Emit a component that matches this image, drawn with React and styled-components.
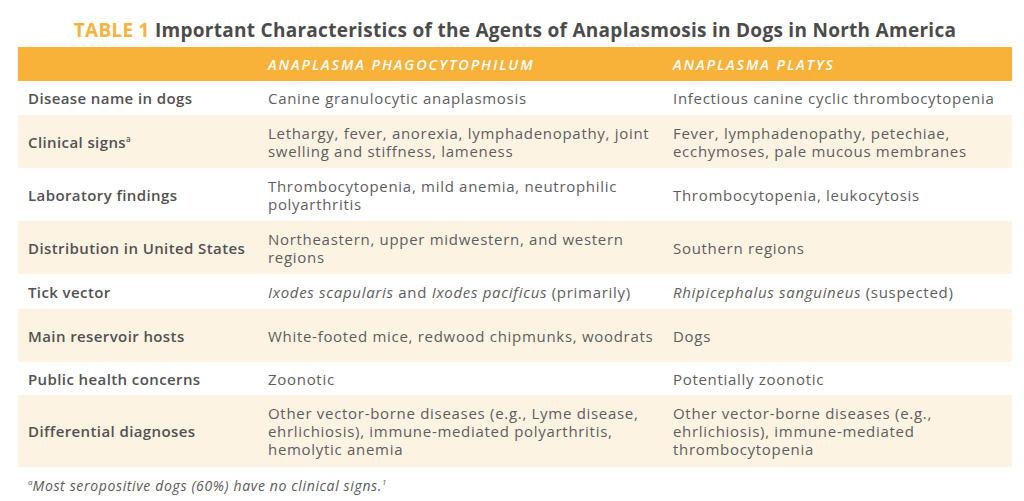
import React from "react";
import styled, { createGlobalStyle } from "styled-components";

const GlobalStyle = createGlobalStyle`
  html, body {
    margin: 0;
    padding: 0;
    background: #ffffff;
  }
  body {
    font-family: "Open Sans", "Noto Sans", sans-serif;
    color: #555555;
  }
`;

const Sup = styled.sup`
  font-size: 8px;
  vertical-align: 6px;
  line-height: 0;
  letter-spacing: 0;
`;

const rows = [
  {
    label: "Disease name in dogs",
    a: "Canine granulocytic anaplasmosis",
    b: "Infectious canine cyclic thrombocytopenia",
    h: 34,
  },
  {
    label: (
      <>
        Clinical signs<Sup>a</Sup>
      </>
    ),
    a: "Lethargy, fever, anorexia, lymphadenopathy, joint swelling and stiffness, lameness",
    b: "Fever, lymphadenopathy, petechiae, ecchymoses, pale mucous membranes",
    h: 53,
  },
  {
    label: "Laboratory findings",
    a: "Thrombocytopenia, mild anemia, neutrophilic polyarthritis",
    b: "Thrombocytopenia, leukocytosis",
    h: 53,
  },
  {
    label: "Distribution in United States",
    a: "Northeastern, upper midwestern, and western regions",
    b: "Southern regions",
    h: 53,
  },
  {
    label: "Tick vector",
    a: (
      <>
        <i>Ixodes scapularis</i> and <i>Ixodes pacificus</i> (primarily)
      </>
    ),
    b: (
      <>
        <i>Rhipicephalus sanguineus</i> (suspected)
      </>
    ),
    h: 35,
  },
  {
    label: "Main reservoir hosts",
    a: "White-footed mice, redwood chipmunks, woodrats",
    b: "Dogs",
    h: 53,
  },
  {
    label: "Public health concerns",
    a: "Zoonotic",
    b: "Potentially zoonotic",
    h: 33,
  },
  {
    label: "Differential diagnoses",
    a: "Other vector-borne diseases (e.g., Lyme disease, ehrlichiosis), immune-mediated polyarthritis, hemolytic anemia",
    b: "Other vector-borne diseases (e.g., ehrlichiosis), immune-mediated thrombocytopenia",
    h: 72,
  },
];

export default function App() {
  return (
    <>
      <GlobalStyle />
      <Page>
        <Title>
          <TableNo>TABLE 1</TableNo> Important Characteristics of the Agents of
          Anaplasmosis in Dogs in North America
        </Title>
        <Table>
          <HeadRow>
            <HeadCell />
            <HeadCell>Anaplasma phagocytophilum</HeadCell>
            <HeadCell>Anaplasma platys</HeadCell>
          </HeadRow>
          {rows.map((r, i) => (
            <Row key={i} $shade={i % 2 === 1} $h={r.h}>
              <Label>{r.label}</Label>
              <Cell>{r.a}</Cell>
              <Cell>{r.b}</Cell>
            </Row>
          ))}
        </Table>
        <Footnote>
          <Sup>a</Sup>Most seropositive dogs (60%) have no clinical signs.
          <Sup>1</Sup>
        </Footnote>
      </Page>
    </>
  );
}

const Page = styled.div`
  width: 1024px;
  height: 501px;
  padding: 17px 12px 0 18px;
  box-sizing: border-box;
`;

const Title = styled.h1`
  margin: 0 0 6px;
  height: 24px;
  font-size: 19px;
  font-weight: 700;
  color: #4b4b4b;
  text-align: center;
  white-space: nowrap;
  letter-spacing: 0.28px;
`;

const TableNo = styled.span`
  color: #f5b33e;
`;

const Table = styled.div`
  width: 994px;
`;

const grid = `
  display: grid;
  grid-template-columns: 240px 405px 1fr;
  align-items: center;
`;

const HeadRow = styled.div`
  ${grid}
  height: 34px;
  background: #f8b23a;
`;

const HeadCell = styled.div`
  padding-left: 10px;
  color: #ffffff;
  font-size: 14.5px;
  font-weight: 600;
  font-style: italic;
  text-transform: uppercase;
  letter-spacing: 1.9px;
`;

const Row = styled.div`
  ${grid}
  height: ${(p) => p.$h}px;
  background: ${(p) => (p.$shade ? "#fdf3e3" : "#ffffff")};
`;

const Label = styled.div`
  padding-left: 10px;
  font-size: 15px;
  font-weight: 600;
  letter-spacing: 0.4px;
  color: #525252;
`;

const Cell = styled.div`
  padding-left: 10px;
  padding-right: 4px;
  font-size: 15px;
  line-height: 18px;
  letter-spacing: 0.7px;
  color: #5e5e5e;
  i {
    font-style: italic;
  }
`;

const Footnote = styled.div`
  margin-top: 9px;
  padding-left: 10px;
  font-size: 14px;
  font-style: italic;
  letter-spacing: 0.65px;
  color: #5a5a5a;
`;
